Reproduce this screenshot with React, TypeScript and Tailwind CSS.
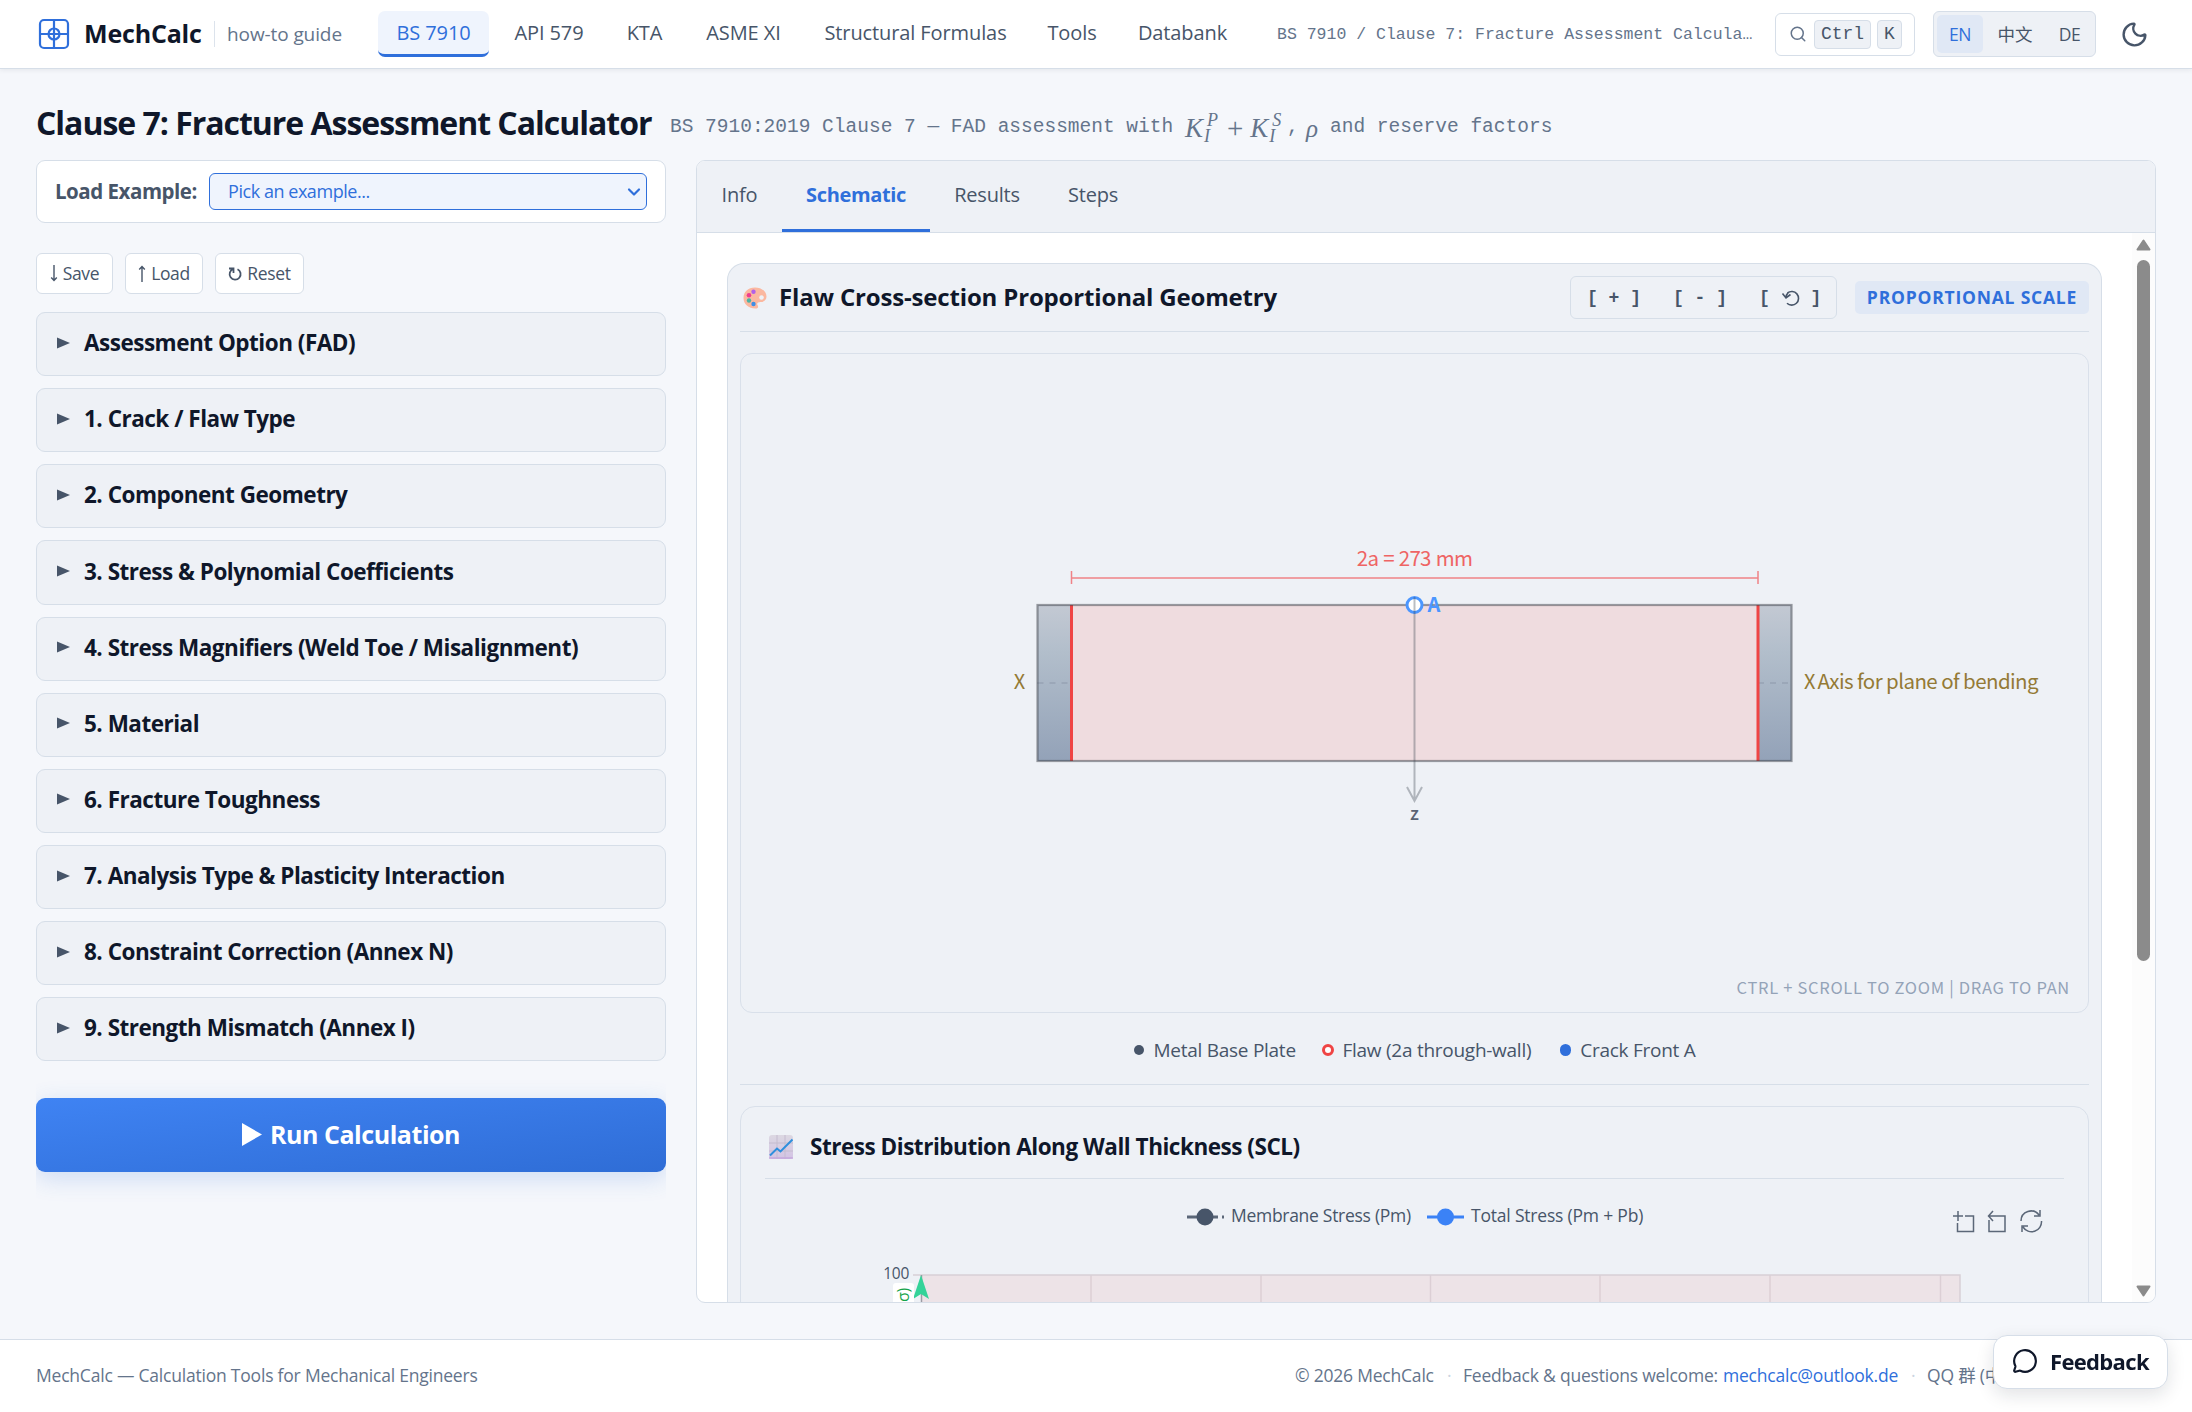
// src/App.tsx
import { useState } from 'react';
import { MessageCircle, Moon, Search, ChevronDown } from 'lucide-react';

const NAV_ITEMS = [
  { label: 'BS 7910', width: 'w-[111px]' },
  { label: 'API 579', width: 'w-[108px]' },
  { label: 'KTA', width: 'w-[71px]' },
  { label: 'ASME XI', width: 'w-[115px]' },
  { label: 'Structural Formulas', width: 'w-[217px]' },
  { label: 'Tools', width: 'w-[84px]' },
  { label: 'Databank', width: 'w-[125px]' },
];

const SECTIONS = [
  'Assessment Option (FAD)',
  '1. Crack / Flaw Type',
  '2. Component Geometry',
  '3. Stress & Polynomial Coefficients',
  '4. Stress Magnifiers (Weld Toe / Misalignment)',
  '5. Material',
  '6. Fracture Toughness',
  '7. Analysis Type & Plasticity Interaction',
  '8. Constraint Correction (Annex N)',
  '9. Strength Mismatch (Annex I)',
];

const TABS = [
  { label: 'Info', width: 'w-[85px]' },
  { label: 'Schematic', width: 'w-[148px]' },
  { label: 'Results', width: 'w-[114px]' },
  { label: 'Steps', width: 'w-[98px]' },
];

function Logo() {
  return (
    <svg width="32" height="32" viewBox="0 0 32 32" fill="none" stroke="#2f6fdb" strokeWidth="2.2">
      <rect x="2" y="2" width="28" height="28" rx="4" />
      <path d="M16 2v28M2 16h28" />
      <circle cx="16" cy="16" r="5.5" />
    </svg>
  );
}

function Header() {
  return (
    <header className="flex h-[69px] shrink-0 items-center border-b border-[#d6dee8] bg-white pl-[38px] shadow-[0_1px_5px_rgba(15,23,42,0.08)]">
      <Logo />
      <span className="ml-[14px] w-[130px] whitespace-nowrap text-[25px] font-bold tracking-[-0.007em] text-[#0f172a]">MechCalc</span>
      <span className="h-[26px] w-px bg-[#dce3ec]" />
      <span className="ml-[12px] w-[151px] whitespace-nowrap text-[19px] tracking-[-0.005em] text-[#64748b]">how-to guide</span>
      <nav className="flex gap-[6px]">
        {NAV_ITEMS.map((item, i) => (
          <a
            key={item.label}
            className={`flex h-[46px] items-center justify-center whitespace-nowrap rounded-[7px] border-b-[3px] text-[20px] tracking-[-0.005em] ${item.width} ${
              i === 0 ? 'border-[#2f6fdb] bg-[#eff4fd] text-[#2f6fdb]' : 'border-transparent text-[#475569]'
            }`}
          >
            {item.label}
          </a>
        ))}
      </nav>
      <span className="ml-[32px] w-[498px] whitespace-nowrap pt-[2px] font-['Liberation_Mono',monospace] text-[16.5px] text-[#64748b]">
        BS 7910 / Clause 7: Fracture Assessment Calcula…
      </span>
      <div className="flex h-[43px] w-[140px] items-center rounded-[6px] border border-[#d6dee8] pl-[13px] font-['Liberation_Mono',monospace] text-[18px] text-[#475569]">
        <Search className="h-[18px] w-[18px] text-[#64748b]" strokeWidth={2} />
        <kbd className="ml-[7px] flex h-[29px] w-[57px] items-center justify-center rounded-[4px] border border-[#d6dee8] bg-[#eef1f6] font-[inherit]">Ctrl</kbd>
        <kbd className="ml-[6px] flex h-[29px] w-[25px] items-center justify-center rounded-[4px] border border-[#d6dee8] bg-[#eef1f6] font-[inherit]">K</kbd>
      </div>
      <div className="ml-[18px] flex h-[46px] w-[163px] items-center rounded-[6px] border border-[#d6dee8] bg-[#eef1f6] pl-[3px] text-[17.5px] tracking-[-0.03em] text-[#475569]">
        <span className="flex h-[38px] w-[46px] items-center justify-center rounded-[5px] bg-[#e0e8f5] text-[#2f6fdb]">EN</span>
        <span className="flex w-[64px] justify-center tracking-normal">中文</span>
        <span className="flex w-[45px] justify-center">DE</span>
      </div>
      <Moon className="ml-[24px] h-[29px] w-[29px] text-[#475569]" strokeWidth={2} />
    </header>
  );
}

function KTerm({ sup }: { sup: string }) {
  return (
    <span className="inline-flex items-center italic">
      <span className="w-[19px] text-[27px] leading-none">K</span>
      <span className="flex w-[16px] flex-col text-[18px] leading-[16px]">
        <span className="pl-[3px]">{sup}</span>
        <span>I</span>
      </span>
    </span>
  );
}

function PageTitle() {
  return (
    <div className="flex h-[91px] items-center pt-[17px]">
      <h1 className="w-[634px] whitespace-nowrap text-[32px] font-bold tracking-[-0.032em] text-[#0f172a]">
        Clause 7: Fracture Assessment Calculator
      </h1>
      <div className="flex items-center whitespace-pre pt-[10px] font-['Liberation_Mono',monospace] text-[19.5px] text-[#64748b]">
        <span className="w-[515px]">BS 7910:2019 Clause 7 — FAD assessment with </span>
        <span className="flex w-[102px] items-center font-['Liberation_Serif',serif]">
          <KTerm sup="P" />
          <span className="ml-[7px] mr-[7px] text-[29px] leading-none">+</span>
          <KTerm sup="S" />
        </span>
        <span className="w-[19px]">,</span>
        <span className="w-[24px] font-['Liberation_Serif',serif] text-[25px] italic leading-none">ρ</span>
        <span>and reserve factors</span>
      </div>
    </div>
  );
}

function Sidebar() {
  return (
    <aside className="flex w-[630px] flex-col overflow-hidden">
      <div className="flex h-[63px] items-center rounded-[9px] border border-[#d6dee8] bg-white pl-[18px]">
        <label className="w-[154px] whitespace-nowrap text-[20.5px] font-bold tracking-[-0.023em] text-[#475569]">Load Example:</label>
        <div className="flex h-[37px] w-[438px] items-center justify-between rounded-[6px] border border-[#2f6fdb] bg-[#eff4fd] pl-[18px] pr-[2px] text-[18px] tracking-[-0.025em] text-[#2f6fdb]">
          Pick an example...
          <ChevronDown className="h-[20px] w-[20px]" strokeWidth={2.6} />
        </div>
      </div>

      <div className="mt-[30px] flex gap-[12px] text-[17.5px] tracking-[-0.02em] text-[#475569]">
        <button className="flex h-[41px] w-[77px] items-center justify-center gap-[5px] rounded-[6px] border border-[#d6dee8] bg-white">
          <svg width="8" height="17" viewBox="0 0 8 17" fill="none" stroke="currentColor" strokeWidth="1.4"><path d="M4 0v15.5M1.2 12.500l2.800 3 2.800-3" /></svg>
          Save
        </button>
        <button className="flex h-[41px] w-[78px] items-center justify-center gap-[5px] rounded-[6px] border border-[#d6dee8] bg-white">
          <svg width="8" height="17" viewBox="0 0 8 17" fill="none" stroke="currentColor" strokeWidth="1.4"><path d="M4 17V1.5M1.200 4.500l2.800-3 2.800 3" /></svg>
          Load
        </button>
        <button className="flex h-[41px] w-[89px] items-center justify-center gap-[4px] rounded-[6px] border border-[#d6dee8] bg-white">
          <svg width="15" height="14" viewBox="0 0 15 14" fill="none" stroke="currentColor" strokeWidth="1.8"><path d="M1 1.500h4.500v4.500M5.200 2A5.500 5.500 0 1 0 9.500 2.200" /></svg>
          Reset
        </button>
      </div>

      <div className="mt-[18px] flex flex-col gap-3">
        {SECTIONS.map((title) => (
          <div key={title} className="flex h-[64.15px] items-center rounded-[9px] border border-[#d6dee8] bg-[#eef1f6] pl-[20px]">
            <svg width="13" height="12" viewBox="0 0 13 12" className="mb-[3px]"><path d="M0 0.500L13 6L0 11.500Z" fill="#475569" /></svg>
            <span className="ml-[14px] whitespace-nowrap pb-[2px] text-[22.5px] font-bold tracking-[-0.022em] text-[#0f172a]">{title}</span>
          </div>
        ))}
      </div>

      <button className="mt-[37px] flex h-[74px] shrink-0 items-center justify-center gap-2 rounded-[9px] bg-gradient-to-br from-[#3f83f3] to-[#2f6dd6] pb-[2px] text-[25px] font-bold tracking-[-0.018em] text-white shadow-[0_6px_24px_rgba(47,111,219,0.2)]">
        <svg width="20" height="23" viewBox="0 0 20 23"><path d="M0 0L20 11.500L0 23Z" fill="#fff" /></svg>
        Run Calculation
      </button>
    </aside>
  );
}

function PaletteIcon() {
  return (
    <svg width="24" height="22" viewBox="0 0 24 22">
      <path d="M12 0.500C5 0.500 .5 5 .5 11s5 10.500 12 10.500c3 0 3-2 2-3.500s.3-3 3-3c3.500 0 6-2 6-5.500C23.500 4 18 .5 12 .5Z" fill="#fbb8a0" />
      <circle cx="18.500" cy="10.500" r="2.300" fill="#eef1f6" />
      <circle cx="10.500" cy="4.800" r="2.200" fill="#b160e8" />
      <circle cx="6" cy="8.300" r="2.300" fill="#ee3d8f" />
      <circle cx="6" cy="13.500" r="2.200" fill="#4cb3a4" />
      <circle cx="10.500" cy="17" r="2.200" fill="#3f8fe6" />
    </svg>
  );
}

function ChartIcon() {
  return (
    <svg width="24" height="24" viewBox="0 0 24 24">
      <defs>
        <linearGradient id="chartBg" x1="0" y1="0" x2="0" y2="1">
          <stop offset="0" stopColor="#dcd8e2" />
          <stop offset="1" stopColor="#d3c3e4" />
        </linearGradient>
      </defs>
      <rect width="24" height="24" rx="3" fill="url(#chartBg)" />
      <path d="M8 0v24M16 0v24M0 8h24M0 16h24" stroke="#c4bccf" />
      <path d="M0 23h24" stroke="#c4a9dc" strokeWidth="1.500" />
      <path d="M1 20.500L8 13.500L11.500 16.500L23.500 4.500" fill="none" stroke="#2f8fdd" strokeWidth="2" />
    </svg>
  );
}

/* Through-wall flaw cross-section */
function FlawDrawing() {
  return (
    <svg width="1347" height="658" viewBox="741 354 1347 658" className="font-['Noto_Sans_CJK_SC',sans-serif]">
      <defs>
        <linearGradient id="plate" x1="0" y1="0" x2="0" y2="1">
          <stop offset="0" stopColor="#c3c9d3" />
          <stop offset="0.300" stopColor="#b2becb" />
          <stop offset="1" stopColor="#93a2b8" />
        </linearGradient>
      </defs>
      <rect x="1037.500" y="605" width="754" height="156" fill="url(#plate)" />
      <rect x="1071.500" y="605" width="686.500" height="156" fill="#efdcdf" />
      <path d="M1037.500 683H1071M1758 683H1791" stroke="#97a3b4" strokeWidth="1.500" strokeDasharray="6 6" />
      <path d="M1071.500 605V761M1758 605V761" stroke="#ef4444" strokeWidth="3" />
      <rect x="1037.500" y="605" width="754" height="156" fill="none" stroke="#3c4048" strokeOpacity="0.500" strokeWidth="2.200" />
      <g stroke="#f08287" strokeWidth="1.500" fill="none">
        <path d="M1071.500 578H1758M1071.500 571V584M1758 571V584" />
      </g>
      <text x="1414.500" y="566" textAnchor="middle" fontSize="20.500" letterSpacing="-0.700" wordSpacing="1" fill="#ee6464">2a = 273 mm</text>
      <circle cx="1414.500" cy="605" r="7.500" fill="#fff" stroke="#4b96ff" strokeWidth="3" />
      <path d="M1414.500 597V800M1407 787L1414.500 801L1422 787" fill="none" stroke="#3c4450" strokeOpacity="0.350" strokeWidth="2" />
      <text x="1427.500" y="612" fontSize="20" fontWeight="700" fill="#4b96ff">A</text>
      <text x="1414.500" y="820" textAnchor="middle" fontSize="18" fontWeight="500" fill="#596273">z</text>
      <text x="1019.500" y="689" textAnchor="middle" fontSize="20" fill="#947a35">X</text>
      <text x="1804" y="689" fontSize="20" fill="#947a35">X</text>
      <text x="1817.500" y="689" fontSize="20.500" letterSpacing="-0.580" fill="#947a35">Axis for plane of bending</text>
      <text x="2070" y="994" textAnchor="end" fontSize="16.500" letterSpacing="0.700" fill="#94a3b8">CTRL + SCROLL TO ZOOM | DRAG TO PAN</text>
    </svg>
  );
}

function StressChart() {
  const gridX = [1091, 1261, 1430.5, 1600, 1770, 1940.5];
  return (
    <svg width="1347" height="124" viewBox="741 1179 1347 124" className="font-['Open_Sans',sans-serif] tracking-[-0.018em]">
      {/* legend */}
      <path d="M1187 1217H1218M1222 1217H1224" stroke="#5b6778" strokeWidth="3" />
      <circle cx="1205" cy="1217" r="8.500" fill="#475569" />
      <text x="1231" y="1222" fontSize="17.500" fill="#475569">Membrane Stress (Pm)</text>
      <path d="M1427 1217H1464" stroke="#3b82f6" strokeWidth="3" />
      <circle cx="1445.500" cy="1217" r="8.500" fill="#3b82f6" />
      <text x="1471" y="1222" fontSize="17.500" letterSpacing="-0.2" fill="#475569">Total Stress (Pm + Pb)</text>

      {/* toolbox */}
      <g fill="none" stroke="#5b6778" strokeWidth="1.500">
        <path d="M1953 1216H1963M1958 1211V1221M1965 1216H1973.500V1231.500H1957.500V1223" />
        <path d="M1989 1216H2005V1231.500H1989V1220M1993 1211L1988.500 1216L1993 1221" />
        <path d="M2021 1221A10 10 0 0 1 2039 1215M2040 1210V1216H2034M2041.500 1221A10 10 0 0 1 2023 1227M2022 1232V1226H2028" />
      </g>

      {/* plot area */}
      <rect x="921.500" y="1275" width="1038.500" height="40" fill="#ede3e7" />
      {gridX.map((x) => (
        <path key={x} d={`M${x} 1275V1303`} stroke="#dccfd5" strokeWidth="1.500" />
      ))}
      <path d="M913 1275H1960V1303" fill="none" stroke="#d8d0d6" strokeWidth="1.500" />
      <path d="M921.500 1275V1303" stroke="#9c9ca5" strokeWidth="1.500" />
      <path d="M921 1275L929 1299L921 1294L913 1299Z" fill="#34d399" />
      <text x="909" y="1279" textAnchor="end" fontSize="15.500" fill="#475569">100</text>
      <rect x="893" y="1283" width="21" height="40" rx="3" fill="#fff" />
      <text transform="translate(909 1288) rotate(-90)" textAnchor="end" fontSize="16" fill="#16a34a">Stress (σ)</text>
    </svg>
  );
}

function SchematicPanel() {
  const [active, setActive] = useState('Schematic');
  return (
    <section className="flex w-[1460px] flex-col overflow-hidden rounded-[9px] border border-[#d6dee8] bg-white">
      <div className="flex h-[72px] shrink-0 border-b border-[#d6dee8] bg-[#eef1f6] text-[20px]">
        {TABS.map((tab) => (
          <button
            key={tab.label}
            onClick={() => setActive(tab.label)}
            className={`flex items-center justify-center border-b-[3px] ${tab.width} ${
              active === tab.label ? 'border-[#2f6fdb] font-bold tracking-[-0.018em] text-[#2f6fdb]' : 'border-transparent tracking-[-0.01em] text-[#475569]'
            }`}
          >
            {tab.label}
          </button>
        ))}
      </div>

      <div className="flex min-h-0 flex-1 justify-between pl-[30px]">
        <div className="mt-[30px] w-[1375px] overflow-hidden rounded-t-[17px] border border-b-0 border-[#d6dee8] bg-[#eef1f6] px-[12px]">
          <div className="flex h-[68px] items-center border-b border-[#d6dee8]">
            <div className="pl-[3px]"><PaletteIcon /></div>
            <h2 className="ml-[12px] flex-1 whitespace-nowrap pb-[2px] text-[24px] font-bold tracking-[-0.007em] text-[#0f172a]">
              Flaw Cross-section Proportional Geometry
            </h2>
            <div className="flex h-[43px] w-[267px] items-center whitespace-pre rounded-[6px] border border-[#d6dee8] pl-[16px] pt-[2px] font-['Liberation_Mono',monospace] text-[18px] font-bold text-[#475569]">
              <span className="w-[86px]">[ + ]</span>
              <span className="w-[86px]">[ - ]</span>
              <span className="flex items-center">
                {'[ '}
                <svg width="19" height="17" viewBox="0 0 19 17" fill="none" stroke="currentColor" strokeWidth="1.600"><path d="M6.500 3A6.800 6.800 0 1 1 6 13.200M1.500 3.500L5 8L9.500 4.500M5 8C5 6 5.500 4.200 7 2.800" /></svg>
                {' ]'}
              </span>
            </div>
            <span className="ml-[18px] flex h-[33px] w-[234px] items-center justify-center whitespace-nowrap rounded-[5px] bg-[#e0e8f5] text-[17.500px] font-bold tracking-[0.045em] text-[#2f6fdb]">
              PROPORTIONAL SCALE
            </span>
          </div>

          <div className="mt-[21px] h-[660px] overflow-hidden rounded-[12px] border border-[#d9e0ea]">
            <FlawDrawing />
          </div>

          <div className="flex h-[72px] items-center justify-center border-b border-[#d6dee8] pt-[3px] text-[19px] tracking-[-0.014em] text-[#475569]">
            <span className="flex w-[188px] items-center whitespace-nowrap"><i className="mr-[10px] h-[10px] w-[10px] rounded-full bg-[#475569]" />Metal Base Plate</span>
            <span className="flex w-[238px] items-center whitespace-nowrap"><i className="mr-[9px] h-[12px] w-[12px] rounded-full border-[3px] border-[#ef4444] bg-white" />Flaw (2a through-wall)</span>
            <span className="flex w-[136px] items-center whitespace-nowrap"><i className="mr-[9px] h-[12px] w-[12px] rounded-full bg-[#2f6fdb]" />Crack Front A</span>
          </div>

          <div className="mt-[21px] h-[400px] rounded-t-[15px] border border-[#d9e0ea]">
            <div className="mx-[24px] flex h-[72px] items-center border-b border-[#d6dee8] pt-[8px]">
              <div className="pl-[4px]"><ChartIcon /></div>
              <h3 className="ml-[17px] whitespace-nowrap text-[22.500px] font-bold tracking-[-0.021em] text-[#0f172a]">
                Stress Distribution Along Wall Thickness (SCL)
              </h3>
            </div>
            <StressChart />
          </div>
        </div>

        {/* scrollbar */}
        <div className="flex w-[23px] flex-col items-center bg-[#fcfcfc] pt-[6px]">
          <svg width="15" height="12" viewBox="0 0 15 12"><path d="M7.500 1.500L13.500 10.500H1.500Z" fill="#8b8b8b" stroke="#8b8b8b" strokeWidth="2" strokeLinejoin="round" /></svg>
          <div className="mt-[9px] h-[701px] w-[13px] rounded-full bg-[#8b8b8b]" />
          <svg width="15" height="12" viewBox="0 0 15 12" className="mb-[5px] mt-auto"><path d="M7.500 10.500L1.500 1.500H13.500Z" fill="#8b8b8b" stroke="#8b8b8b" strokeWidth="2" strokeLinejoin="round" /></svg>
        </div>
      </div>
    </section>
  );
}

function Footer() {
  return (
    <footer className="flex h-[73px] shrink-0 items-center whitespace-nowrap border-t border-[#d6dee8] bg-white px-[36px] pb-[2px] text-[17.500px] tracking-[-0.012em] text-[#64748b]">
      <span className="w-[1259px]">MechCalc — Calculation Tools for Mechanical Engineers</span>
      <span className="w-[152px]">© 2026 MechCalc</span>
      <span className="w-[16px] text-[#cbd5e1]">·</span>
      <span className="w-[260px]">Feedback &amp; questions welcome:</span>
      <a className="w-[188px] text-[#2f6fdb]">mechcalc@outlook.de</a>
      <span className="w-[16px] text-[#cbd5e1]">·</span>
      <span>QQ 群 (中文)</span>
    </footer>
  );
}

export default function App() {
  return (
    <div className="flex h-[1412px] w-[2192px] flex-col overflow-hidden bg-[#f5f7fb] font-['Open_Sans','Noto_Sans_CJK_SC',sans-serif]">
      <Header />
      <main className="flex h-[1270px] shrink-0 flex-col px-[36px] pb-[36px]">
        <PageTitle />
        <div className="flex min-h-0 flex-1 justify-between">
          <Sidebar />
          <SchematicPanel />
        </div>
      </main>
      <Footer />
      <button className="fixed bottom-[23px] right-[24px] flex h-[54px] w-[175px] items-center rounded-[14px] border border-[#d6dee8] bg-white pb-[2px] pl-[18px] text-[22px] font-bold tracking-[-0.03em] text-[#0f172a] shadow-[0_6px_18px_rgba(15,23,42,0.12)]">
        <MessageCircle className="mr-[12px] h-[26px] w-[26px]" strokeWidth={2} />
        Feedback
      </button>
    </div>
  );
}
